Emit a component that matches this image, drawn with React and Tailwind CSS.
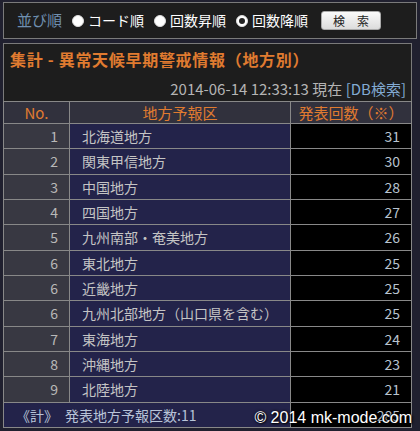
const ROWS = [
  [1, "北海道地方", 31],
  [2, "関東甲信地方", 30],
  [3, "中国地方", 28],
  [4, "四国地方", 27],
  [5, "九州南部・奄美地方", 26],
  [6, "東北地方", 25],
  [6, "近畿地方", 25],
  [6, "九州北部地方（山口県を含む）", 25],
  [7, "東海地方", 24],
  [8, "沖縄地方", 23],
  [9, "北陸地方", 21],
];

const JP = { fontFamily: '"Noto Sans CJK JP", "Noto Sans", sans-serif' };

function Radio({ checked, label }) {
  return (
    <label className="flex items-center gap-[4px] text-[14px] text-white">
      <span className="w-[12px] h-[12px] rounded-full bg-white flex items-center justify-center border border-[#ddd]">
        {checked && <span className="w-[6px] h-[6px] rounded-full bg-[#222]" />}
      </span>
      {label}
    </label>
  );
}

export default function App() {
  return (
    <div className="relative w-[420px] h-[431px] bg-[#20202f] pt-[2px] pl-[3px] overflow-hidden" style={JP}>
      <div className="w-[414px] h-[37px] border border-[#7a7a7a] bg-[#1d1d1d] flex items-center pl-[13px]">
        <span className="text-[15px] text-[#6f8fb0] mr-[10px]">並び順</span>
        <div className="flex items-center gap-[10px]">
          <Radio label="コード順" />
          <Radio label="回数昇順" />
          <Radio checked label="回数降順" />
        </div>
        <button className="ml-[13px] w-[60px] h-[19px] rounded-[3px] bg-gradient-to-b from-[#fafafa] to-[#dcdcdc] border border-[#aaa] text-[12px] text-[#222] leading-none">
          検　索
        </button>
      </div>

      <div className="mt-[4px] w-[409px] h-[385px] border border-[#7a7a7a] bg-[#1d1d1d] flex flex-col">
        <h1 className="text-[16px] font-bold text-[#e07b30] pl-[6px] pt-[3px] leading-[24px] tracking-[0.7px]">
          集計 - 異常天候早期警戒情報（地方別）
        </h1>
        <div className="text-right text-[15px] text-[#b4b4b4] pr-[5px] mt-[8px] leading-[20px]">
          2014-06-14 12:33:13 現在 <span className="text-[#82aad2]">[DB検索]</span>
        </div>
        <table className="mt-[2px] border-collapse w-[409px] -ml-[1px] text-[14px] leading-[20px]">
          <thead>
            <tr className="h-[22px] bg-[#31313d] text-[#e07b30] text-[15px]">
              <th className="w-[66px] border border-[#888] font-normal">No.</th>
              <th className="w-[221px] border border-[#888] font-normal">地方予報区</th>
              <th className="border border-[#888] font-normal">発表回数（※）</th>
            </tr>
          </thead>
          <tbody>
            {ROWS.map(([no, name, count], i) => (
              <tr key={i} className="h-[25.33px]">
                <td className="border border-[#888] bg-[#383842] text-[#b8b8b8] text-right pr-[11px]">{no}</td>
                <td className="border border-[#888] bg-[#23234a] text-[#c4c4c4] pl-[12px]">{name}</td>
                <td className="border border-[#888] bg-black text-[#b8c4d0] text-right pr-[11px]">{count}</td>
              </tr>
            ))}
            <tr className="h-[25.33px]">
              <td colSpan={2} className="border border-[#888] bg-[#23234a] text-[#b8c4d8] pl-[12px]">
                《計》　発表地方予報区数:11
              </td>
              <td className="border border-[#888] bg-black text-[#b8c4d0] text-right pr-[11px]">285</td>
            </tr>
          </tbody>
        </table>
      </div>

      <div
        className="absolute right-[8px] bottom-[5px] text-[16px] text-white leading-none [text-shadow:0_0_3px_#000,1px_1px_2px_#000]"
        style={{ fontFamily: '"Liberation Sans", Arial, sans-serif' }}
      >
        © 2014 mk-mode.com
      </div>
    </div>
  );
}
